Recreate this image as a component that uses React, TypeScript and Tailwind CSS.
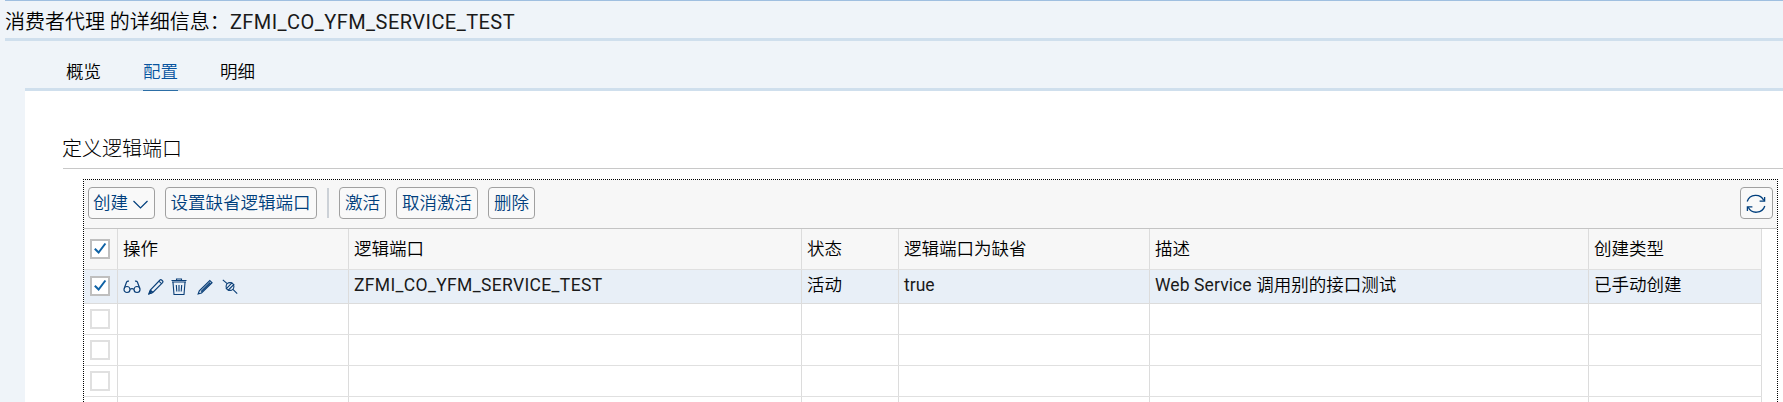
import React from "react";

const latin = "font-['Roboto','Noto_Sans_CJK_SC',sans-serif]";

function Check({ on = false }: { on?: boolean }) {
  return (
    <span className={`flex size-5 shrink-0 items-center justify-center border-2 bg-white ${on ? "border-[#bfbfbf]" : "border-[#e0e0e0]"}`}>
      {on && (
        <svg width="16" height="16" viewBox="0 0 16 16" fill="none" stroke="#0f62a5" strokeWidth="2">
          <path d="M2.800 7.700 6.600 11.500 13.400 2.500" />
        </svg>
      )}
    </span>
  );
}

function Btn({ children, className }: { children: React.ReactNode; className: string }) {
  return (
    <button className={`flex h-8 shrink-0 items-center justify-center rounded-[4px] border border-[#a0a0a0] bg-[#f9f9f9] pt-px text-[17.5px] leading-none text-[#003f7d] ${className}`}>
      {children}
    </button>
  );
}

function RowIcons() {
  return (
    <div className="flex items-center text-[#0a3f78]">
      <svg className="mr-[7px]" width="18" height="18" viewBox="0 0 18 18" fill="none" stroke="currentColor" strokeWidth="1.2">
        <circle cx="4" cy="11.500" r="3" />
        <circle cx="14" cy="11.500" r="3" />
        <path d="M7 11.400q2-1.600 4 0M1.200 10.500 3.600 4.100q.6-1.300 2.400-1M16.800 10.500 14.400 4.100q-.6-1.300-2.400-1" />
      </svg>
      <svg className="mr-[7px]" width="16" height="18" viewBox="0 0 16 18" fill="none" stroke="currentColor" strokeWidth="1.1">
        <path d="M1 15.800 2.300 12 12 2q.8-.7 1.600 0l1 1q.8.8 0 1.600L4.800 14.500ZM2.300 12 4.800 14.500M10.900 3.200l2.500 2.500" />
        <path d="M1 15.800 1.800 13.500 3.300 15Z" fill="currentColor" />
      </svg>
      <svg className="mr-[10px]" width="16" height="18" viewBox="0 0 16 18" fill="none" stroke="currentColor" strokeWidth="1.1">
        <path d="M.5 2.500h15M1 4h14M5.500 2.300V1h5v1.300M2 4.500l1 12h10l1-12M5.300 7l.5 6.500M8 7v6.500M10.700 7l-.5 6.500" />
      </svg>
      <svg className="mr-[9px]" width="16" height="18" viewBox="0 0 16 18" fill="none" stroke="currentColor" strokeWidth="1.2">
        <path d="M1.200 15.900 2.300 12.900 12.800 2.500l2.200 2.200L4.500 15ZM4 13.600 13.200 4.500" />
      </svg>
      <svg width="16" height="18" viewBox="0 0 16 18" fill="none" stroke="currentColor" strokeWidth="1.1">
        <circle cx="8" cy="8.500" r="3.900" />
        <path d="M.8 1.800 5.200 5.700M10.900 11.300l4.300 4.300M3.900 11.200 10.200 4.700M5.900 12.500 12.200 6.100" />
      </svg>
    </div>
  );
}

const cols = "grid w-[1678px] grid-cols-[34px_231px_453px_97px_251px_439px_173px]";
const cell = "flex items-center border-r border-[#dcdcdc] pl-[5px] whitespace-pre";
const boxCell = "flex items-center border-r border-[#dcdcdc] pl-[6px]";

export default function App() {
  return (
    <div className={`flex h-[402px] w-[1783px] flex-col overflow-hidden bg-[#eff4f9] font-[350] text-black ${latin}`}>
      <header className="ml-[5px] flex h-[41px] shrink-0 items-center border-t border-b-[3px] border-t-[#9fbfe0] border-b-[#cfdfed] pt-[4px] text-[20px] whitespace-pre">
        <span>消费者代理 的详细信息：</span>
        <span className="font-normal tracking-[0.45px] text-[#1a1a1a]">ZFMI_CO_YFM_SERVICE_TEST</span>
      </header>
      <nav className="ml-[25px] flex h-[50px] shrink-0 items-end gap-[42px] border-b-[3px] border-[#cfdfed] pl-[41px] text-[17.5px] leading-none">
        <span className="pb-[7px]">概览</span>
        <span className="-mb-[3px] border-b border-[#2c6ea6] pb-[9px] text-[#0854a0]">配置</span>
        <span className="pb-[7px]">明细</span>
      </nav>
      <main className="ml-[25px] flex min-h-0 grow flex-col bg-white pl-[38px]">
        <h2 className="flex h-[78px] shrink-0 items-end border-b border-[#c8c8c8] pb-[9px] text-[20px] leading-none font-light text-black">
          <span className="-ml-px">定义逻辑端口</span>
        </h2>
        <section className="mt-[10px] ml-5 flex min-h-0 w-[1695px] grow flex-col bg-[linear-gradient(#fff,#fff),repeating-linear-gradient(90deg,#000_0_1px,#fff_1px_2px),repeating-linear-gradient(180deg,#000_0_1px,#fff_1px_2px)] bg-[size:1693px_100%,100%_1px,100%_100%] bg-[position:1px_1px,0_0,0_0] bg-no-repeat px-px pt-px">
          <div className="flex h-[49px] shrink-0 items-start border-b border-[#c4c4c4] bg-[#f7f7f7] pt-[7px] pr-1 pl-1">
            <Btn className="w-[67px] gap-[4px] pr-px">
              创建
              <svg width="17" height="16" viewBox="0 0 17 16" fill="none" stroke="currentColor" strokeWidth="1.2"><path d="M1.500 5 8.500 12l7-7" /></svg>
            </Btn>
            <Btn className="ml-[10px] w-[152px] pr-px">设置缺省逻辑端口</Btn>
            <span className="mt-px ml-[10px] h-[30px] w-[2px] bg-[#ccd1d7]" />
            <Btn className="ml-[10px] w-[47px]">激活</Btn>
            <Btn className="ml-[10px] w-[82px]">取消激活</Btn>
            <Btn className="ml-[10px] w-[47px]">删除</Btn>
            <Btn className="ml-auto w-[33px] pr-[2px]">
              <svg width="20" height="20" viewBox="0 0 20 20" fill="none" stroke="currentColor" strokeWidth="1.3">
                <path d="M1.200 7.500A9 9 0 0 1 17.800 6.500M18.800 12A9 9 0 0 1 2.200 13.300" />
                <path d="M18.600 3v4.200H13.600M1.400 17v-4.200h5" />
              </svg>
            </Btn>
          </div>
          <div className={`${cols} h-[41px] shrink-0 border-b border-[#e0e0e0] bg-[#f7f7f7] text-[17.5px]`}>
            <div className={boxCell}><Check on /></div>
            <div className={cell}>操作</div>
            <div className={cell}>逻辑端口</div>
            <div className={cell}>状态</div>
            <div className={cell}>逻辑端口为缺省</div>
            <div className={cell}>描述</div>
            <div className={cell}>创建类型</div>
          </div>
          <div className={`${cols} h-[34px] shrink-0 border-b border-[#dcdcdc] bg-[#e8eff7] text-[17.5px]`}>
            <div className={`${boxCell} pb-px`}><Check on /></div>
            <div className={cell}><RowIcons /></div>
            <div className={`${cell} pb-[2px] font-normal tracking-[0.35px] text-[#1a1a1a]`}>ZFMI_CO_YFM_SERVICE_TEST</div>
            <div className={`${cell} pb-[2px]`}>活动</div>
            <div className={`${cell} pb-[2px] font-normal text-[#1a1a1a]`}>true</div>
            <div className={`${cell} pb-[2px]`}><span className="font-normal tracking-[0.1px] text-[#1a1a1a]">Web Service </span>调用别的接口测试</div>
            <div className={`${cell} pb-[2px]`}>已手动创建</div>
          </div>
          {[0, 1, 2, 3].map((r) => (
            <div key={r} className={`${cols} h-[31px] shrink-0 border-b border-[#e0e0e0]`}>
              <div className={boxCell}>{r < 3 && <Check />}</div>
              {[1, 2, 3, 4, 5, 6].map((c) => <div key={c} className={cell} />)}
            </div>
          ))}
        </section>
      </main>
    </div>
  );
}
